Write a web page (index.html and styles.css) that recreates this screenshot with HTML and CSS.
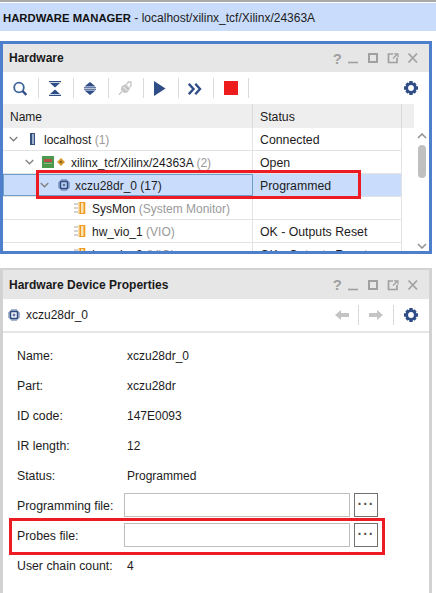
FILE: index.html
```html
<!DOCTYPE html>
<html lang="en">
<head>
<meta charset="utf-8">
<title>Hardware Manager</title>
<link rel="stylesheet" href="styles.css">
</head>
<body>
<svg class="defs" width="0" height="0">
  <defs>
    <symbol id="chip" viewBox="0 0 12 12">
      <rect x="2.500" y="2.500" width="7" height="7" fill="none" stroke="#2f4d80" stroke-width="1.600"/>
      <rect x="4.700" y="4.700" width="2.600" height="2.600" fill="#5b76a3"/>
      <path d="M0 4h2M0 6h2M0 8h2M10 4h2M10 6h2M10 8h2M4 0v2M6 0v2M8 0v2M4 10v2M6 10v2M8 10v2" stroke="#4f6b9a" stroke-width="1"/>
    </symbol>
    <symbol id="vio" viewBox="0 0 12 14">
      <path d="M0 3h4M0 7h4M0 11h4" stroke="#a8a8a8" stroke-width="1.200"/>
      <rect x="4" y="1" width="8" height="12" fill="#fbe3b5"/>
      <rect x="5.500" y="1" width="1.500" height="12" fill="#f09a24"/>
      <rect x="9.500" y="1" width="1.500" height="12" fill="#f09a24"/>
      <path d="M5.500 1.500h5.500M5.500 12.500h5.500" stroke="#f09a24" stroke-width="1"/>
    </symbol>
    <symbol id="gear" viewBox="0 0 16 16">
      <circle cx="8" cy="8" r="4.300" fill="none" stroke="#2f4d87" stroke-width="2.800"/>
      <g fill="#2f4d87">
        <rect x="6.300" y="1" width="3.400" height="3"/>
        <rect x="6.300" y="12" width="3.400" height="3"/>
        <rect x="1" y="6.300" width="3" height="3.400"/>
        <rect x="12" y="6.300" width="3" height="3.400"/>
        <rect x="6.500" y="1.500" width="3" height="3" transform="rotate(45 8 8)"/>
        <rect x="6.500" y="11.500" width="3" height="3" transform="rotate(45 8 8)"/>
        <rect x="1.500" y="6.500" width="3" height="3" transform="rotate(45 8 8)"/>
        <rect x="11.500" y="6.500" width="3" height="3" transform="rotate(45 8 8)"/>
      </g>
    </symbol>
    <symbol id="chev" viewBox="0 0 9 6">
      <path d="M.7 1l3.800 3.800L8.300 1" fill="none" stroke="#808080" stroke-width="1.300"/>
    </symbol>
    <symbol id="wbtns" viewBox="0 0 72 14">
      <path d="M0 11.500h10" stroke="#a0a0a0" stroke-width="1.600" fill="none"/>
      <rect x="21" y="3" width="8" height="8" fill="none" stroke="#a0a0a0" stroke-width="2"/>
      <path d="M45 3h-4.500v8.500h8.500V7" fill="none" stroke="#a0a0a0" stroke-width="1.700"/>
      <path d="M45 7.500L49 3.500M46 2.800h4V6.500" fill="none" stroke="#a0a0a0" stroke-width="1.200"/>
      <path d="M60.500 2.500l8.500 9M69 2.500l-8.500 9" fill="none" stroke="#a0a0a0" stroke-width="1.700"/>
    </symbol>
  </defs>
</svg>

<div class="topline"></div>
<header class="banner"><b>HARDWARE MANAGER</b> - localhost/xilinx_tcf/Xilinx/24363A</header>

<section class="panel panel-active">
  <div class="title">
    <span class="title-text">Hardware</span>
    <span class="q">?</span>
    <svg class="wbtns" width="72" height="14"><use href="#wbtns"/></svg>
  </div>
  <div class="toolbar">
    <svg class="tool" viewBox="0 0 16 16"><circle cx="6" cy="7.500" r="4.800" fill="none" stroke="#3d6498" stroke-width="1.800"/><path d="M9.500 11l3.800 3.800" stroke="#2f4d87" stroke-width="2.400"/></svg>
    <i class="sep"></i>
    <svg class="tool" viewBox="0 0 16 16"><path d="M1 1.700h12M1 15.300h12" stroke="#2f4d87" stroke-width="1.300"/><path d="M2 3h10L7 7.500zM2 14h10L7 9.500z" fill="#2f4d87"/></svg>
    <i class="sep"></i>
    <svg class="tool" viewBox="0 0 16 16"><path d="M7 2l5.500 4.500H1.500zM7 15l5.500-4.500H1.500z" fill="#2f4d87"/><path d="M1 7.700h12M1 9.300h12" stroke="#2f4d87" stroke-width=".9"/></svg>
    <i class="sep"></i>
    <svg class="tool" viewBox="0 0 16 16"><path d="M3.500 6.500L7.500 4l4.500 4.500-2.500 4-3.500.5-3-3z" fill="#c6c6c6"/><path d="M8.500 4.500L11 1.500M11.500 7.500l2-2.500M9.500 2h3.500v3M1 14.500l3-3" fill="none" stroke="#c6c6c6" stroke-width="1.300"/><path d="M5.500 7l3.500 3.500" stroke="#fff" stroke-width="1"/></svg>
    <i class="sep"></i>
    <svg class="tool" viewBox="0 0 16 16"><path d="M1 1L12.500 8.500 1 16z" fill="#2f4d87"/></svg>
    <i class="sep"></i>
    <svg class="tool" viewBox="0 0 16 16"><path d="M.8 3.800L5.500 9 .8 14.200M7.300 3.800L12 9l-4.700 5.200" fill="none" stroke="#2f4d87" stroke-width="2.400"/></svg>
    <i class="sep"></i>
    <span class="stop"></span>
    <i class="sep"></i>
    <svg class="gear"><use href="#gear"/></svg>
  </div>
  <div class="treewrap">
    <div class="tree">
      <div class="tree-head"><span class="c-name">Name</span><span class="c-status">Status</span></div>
      <div class="row">
        <span class="c-name l1"><svg class="chev"><use href="#chev"/></svg>
          <svg class="ico-host" viewBox="0 0 5 12"><rect width="5" height="12" fill="#33517f"/><rect x="2" y="1" width="2" height="10" fill="#9fb1cc"/></svg>
          <span class="t">localhost <em>(1)</em></span></span>
        <span class="c-status">Connected</span>
      </div>
      <div class="row">
        <span class="c-name l2"><svg class="chev"><use href="#chev"/></svg>
          <svg class="ico-fpga" viewBox="0 0 12 12"><rect width="12" height="12" fill="#4d9a4c"/><rect x="2" y="3" width="8" height="3" fill="#b8504a"/><rect x="2" y="7" width="8" height="1" fill="#86b885"/></svg>
          <svg class="ico-tag" viewBox="0 0 8 8"><path d="M4 0l4 4-4 4-4-4z" fill="#d9992b"/><path d="M2.500 4L4 2.500 5.500 4 4 5.500z" fill="#7a5f20"/></svg>
          <span class="t">xilinx_tcf/Xilinx/24363A <em>(2)</em></span></span>
        <span class="c-status">Open</span>
      </div>
      <div class="row selected">
        <span class="c-name l3 focus"><svg class="chev"><use href="#chev"/></svg>
          <svg class="ico-chip"><use href="#chip"/></svg>
          <span class="t">xczu28dr_0 (17)</span></span>
        <span class="c-status">Programmed</span>
      </div>
      <div class="row">
        <span class="c-name l4"><svg class="ico-vio"><use href="#vio"/></svg><span class="t">SysMon <em>(System Monitor)</em></span></span>
        <span class="c-status"></span>
      </div>
      <div class="row">
        <span class="c-name l4"><svg class="ico-vio"><use href="#vio"/></svg><span class="t">hw_vio_1 <em>(VIO)</em></span></span>
        <span class="c-status">OK - Outputs Reset</span>
      </div>
      <div class="row">
        <span class="c-name l4"><svg class="ico-vio"><use href="#vio"/></svg><span class="t">hw_vio_2 <em>(VIO)</em></span></span>
        <span class="c-status">OK - Outputs Reset</span>
      </div>
    </div>
    <div class="gapcol"></div>
    <div class="scrollbar">
      <svg class="sarrow" viewBox="0 0 10 6"><path d="M1 5l4-4 4 4" fill="none" stroke="#909090" stroke-width="1.500"/></svg>
      <div class="thumb"></div>
      <svg class="sarrow down" viewBox="0 0 10 6"><path d="M1 1l4 4 4-4" fill="none" stroke="#909090" stroke-width="1.500"/></svg>
    </div>
  </div>
</section>

<section class="panel panel-props">
  <div class="title">
    <span class="title-text">Hardware Device Properties</span>
    <span class="q">?</span>
    <svg class="wbtns" width="72" height="14"><use href="#wbtns"/></svg>
  </div>
  <div class="subbar">
    <svg class="ico-chip"><use href="#chip"/></svg>
    <span class="sub-name">xczu28dr_0</span>
    <svg class="arrow" viewBox="0 0 14 10"><path d="M0 5l6-5v3h8v4H6v3z" fill="#c4c4c4"/></svg>
    <i class="sep"></i>
    <svg class="arrow arrow-next" viewBox="0 0 14 10"><path d="M14 5L8 0v3H0v4h8v3z" fill="#c4c4c4"/></svg>
    <i class="sep"></i>
    <svg class="gear"><use href="#gear"/></svg>
  </div>
  <div class="props">
    <div class="prop"><span class="k">Name:</span><span class="v">xczu28dr_0</span></div>
    <div class="prop"><span class="k">Part:</span><span class="v">xczu28dr</span></div>
    <div class="prop"><span class="k">ID code:</span><span class="v">147E0093</span></div>
    <div class="prop"><span class="k">IR length:</span><span class="v">12</span></div>
    <div class="prop"><span class="k">Status:</span><span class="v">Programmed</span></div>
    <div class="prop"><span class="k">Programming file:</span><span class="field"></span><span class="more">···</span></div>
    <div class="prop"><span class="k">Probes file:</span><span class="field"></span><span class="more">···</span></div>
    <div class="prop"><span class="k">User chain count:</span><span class="v">4</span></div>
  </div>
</section>

<div class="callout callout-device"></div>
<div class="callout callout-probes"></div>
</body>
</html>
```

FILE: styles.css
```css
* { box-sizing: border-box; }
html, body { margin: 0; padding: 0; }
body {
  width: 436px;
  height: 593px;
  overflow: hidden;
  position: relative;
  background: #fff;
  font: 12px "Liberation Sans", Arial, sans-serif;
  color: #1c1c1c;
}
.defs { position: absolute; }
.topline { height: 3px; background: #fff; border-top: 2px solid #aaa; }
.banner {
  height: 28px;
  padding-left: 3px;
  background: #c9dcfb;
  line-height: 30px;
  font-size: 12px;
  white-space: nowrap;
  color: #222;
}
.banner b { color: #111; font-size: 11.300px; }

.panel { width: 432px; display: flex; flex-direction: column; overflow: hidden; }
.panel-active {
  height: 213px;
  margin-top: 10px;
  border: 3px solid #4d7fcc;
}
.panel-props {
  height: 325px;
  margin-top: 14px;
  border: solid #d2d2d2;
  border-width: 2px 3px 0 3px;
}
.title {
  flex: none;
  height: 28px;
  padding-left: 6px;
  background: #e6e6e6;
  display: flex;
  align-items: center;
}
.panel-props .title { height: 29px; }
.title-text { flex: 1; font-weight: bold; color: #1a1a1a; font-size: 12px; }
.q { font: bold 15px "Liberation Sans", sans-serif; color: #a0a0a0; margin-right: 6px; }
.wbtns { margin-right: 9px; flex: none; }

.toolbar {
  flex: none;
  height: 32px;
  display: flex;
  align-items: center;
  padding-left: 10px;
  gap: 9px;
  background: #fff;
}
.tool { width: 16px; height: 16px; flex: none; }
.sep { width: 1px; height: 20px; background: #d9d9d9; flex: none; }
.stop { width: 14px; height: 14px; background: #ee1c1c; flex: none; margin: 0 1px; }
.toolbar .gear { margin-left: auto; margin-right: 10px; }
.gear { width: 16px; height: 16px; flex: none; }

.treewrap { flex: 1; display: flex; min-height: 0; overflow: hidden; }
.tree { width: 399px; flex: none; }
.gapcol { width: 12px; flex: none; background: linear-gradient(#eee 24px, #fff 24px); }
.scrollbar {
  width: 15px;
  flex: none;
  background: #fff;
  display: flex;
  flex-direction: column;
  align-items: center;
}
.sarrow { width: 10px; height: 6px; margin-top: 29px; flex: none; }
.thumb { width: 8px; height: 33px; margin-top: 6px; border-radius: 4px; background: #c0c0c0; flex: none; }
.sarrow.down { margin-top: 65px; }

.tree-head { height: 24px; display: flex; background: #eee; line-height: 26px; }
.tree-head .c-name { padding-left: 7px; border-right: 1px solid #d8d8d8; }
.tree-head .c-status { border-right: 1px solid #d8d8d8; }
.c-name { width: 250px; flex: none; }
.c-status { flex: 1; padding-left: 7px; font-size: 12.300px; }
.row { height: 23px; display: flex; line-height: 22px; border-bottom: 1px solid #e3e3e3; white-space: nowrap; }
.row .c-name { display: flex; align-items: center; border-right: 1px solid #e3e3e3; }
.row .c-status { border-right: 1px solid #e3e3e3; padding-top: 1px; }
.row .t { padding-top: 2px; }
.row em { font-style: normal; color: #9a9a9a; }
.row.selected { background: #c9dcfb; }
.row.selected .focus { border: 1px solid #6f9fc8; }
.chev { width: 9px; height: 6px; flex: none; }
.l1 { padding-left: 6px; }
.l1 .ico-host { width: 5px; height: 12px; margin: 0 9px 0 12px; flex: none; }
.l2 { padding-left: 22px; }
.l2 .ico-fpga { width: 12px; height: 12px; margin: 0 3px 0 8px; flex: none; }
.l2 .ico-tag { width: 8px; height: 8px; margin-right: 6px; flex: none; }
.l3 { padding-left: 36px; }
.l3 .ico-chip { margin: 0 5px 0 9px; }
.ico-chip { width: 12px; height: 12px; flex: none; }
.l4 { padding-left: 71px; }
.ico-vio { width: 12px; height: 14px; margin-right: 6px; flex: none; }

.subbar {
  flex: none;
  height: 32px;
  display: flex;
  align-items: center;
  padding-left: 5px;
  gap: 9px;
  background: #fff;
}
.sub-name { flex: 1; margin-left: -3px; }
.subbar .gear { margin-right: 10px; }
.arrow { width: 14px; height: 10px; flex: none; }
.arrow-next { margin: 0 1px; }

.props { flex: 1; border-top: 2px solid #e6e6e6; padding: 7px 0 0 14px; }
.prop { height: 30px; display: flex; align-items: center; }
.k { width: 107px; flex: none; white-space: nowrap; padding-top: 2px; font-size: 12.300px; }
.v { padding: 2px 0 0 3px; }
.field { width: 226px; height: 24px; border: 1px solid #bdbdbd; background: #fff; flex: none; }
.more {
  width: 24px;
  height: 24px;
  margin-left: 4px;
  border: 1px solid #707070;
  text-align: center;
  line-height: 20px;
  font-weight: bold;
  font-size: 14px;
  letter-spacing: 1px;
  color: #555;
  flex: none;
}

.callout { position: absolute; border: 3px solid #ed1c24; pointer-events: none; }
.callout-device { left: 36px; top: 170px; width: 325px; height: 29px; }
.callout-probes { left: 9px; top: 518px; width: 376px; height: 37px; }
```
